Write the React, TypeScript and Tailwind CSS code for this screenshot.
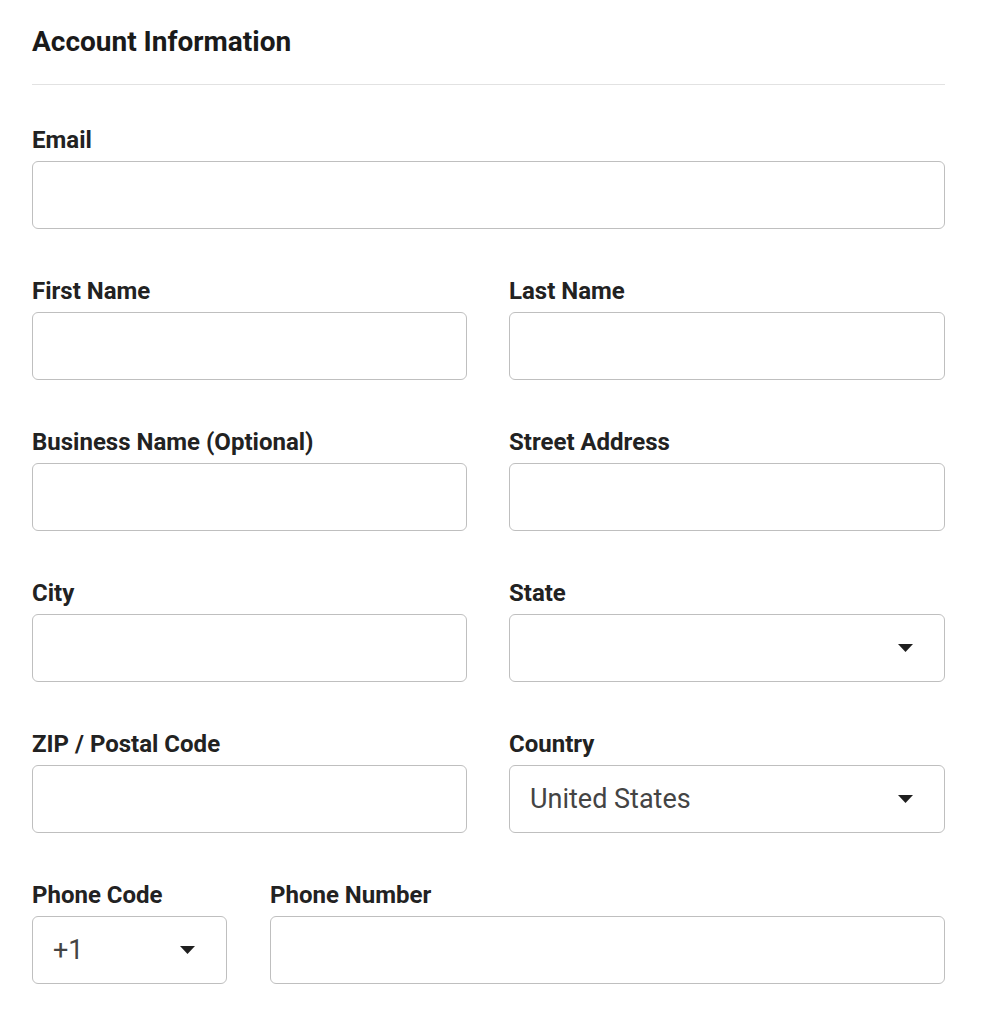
import React from 'react';

const font = { fontFamily: 'Roboto, "Liberation Sans", sans-serif' };

const inputCls =
  'block w-full h-[68px] rounded-[6px] border border-[#bfbfbf] bg-white px-[20px] text-[27px] text-[#444] outline-none';

function Caret() {
  return (
    <svg
      className="pointer-events-none absolute right-[32px] top-1/2 -translate-y-1/2"
      width="15"
      height="8"
      viewBox="0 0 15 8"
    >
      <path d="M0 0 H15 L7.5 8 Z" fill="#1f1f1f" />
    </svg>
  );
}

function Field({ label, children }: { label: string; children: React.ReactNode }) {
  return (
    <div className="flex flex-col">
      <label className="mb-[9px] text-[24px] leading-[24px] font-bold text-[#222]">{label}</label>
      {children}
    </div>
  );
}

function TextInput() {
  return <input type="text" className={inputCls} />;
}

function Select({ value, options }: { value: string; options: string[] }) {
  return (
    <div className="relative">
      <select defaultValue={value} className={inputCls + ' appearance-none'}>
        {options.map((o) => (
          <option key={o} value={o}>
            {o}
          </option>
        ))}
      </select>
      <Caret />
    </div>
  );
}

export default function App() {
  return (
    <div className="min-h-screen bg-white" style={font}>
      <div className="ml-[32px] w-[913px]">
        <div className="pt-[26px] pb-[26px] border-b border-[#e2e2e2]">
          <h1 className="text-[28px] leading-[32px] font-bold text-[#1a1a1a]">Account Information</h1>
        </div>

        <div className="mt-[43px] flex flex-col gap-[50px]">
          <Field label="Email">
            <TextInput />
          </Field>

          <div className="grid grid-cols-[435px_1fr] gap-x-[42px] gap-y-[50px]">
            <Field label="First Name">
              <TextInput />
            </Field>
            <Field label="Last Name">
              <TextInput />
            </Field>
            <Field label="Business Name (Optional)">
              <TextInput />
            </Field>
            <Field label="Street Address">
              <TextInput />
            </Field>
            <Field label="City">
              <TextInput />
            </Field>
            <Field label="State">
              <Select value="" options={['', 'Alabama', 'Alaska', 'Arizona', 'California', 'New York']} />
            </Field>
            <Field label="ZIP / Postal Code">
              <TextInput />
            </Field>
            <Field label="Country">
              <Select value="United States" options={['United States', 'Canada', 'Mexico']} />
            </Field>
          </div>

          <div className="flex gap-[43px]">
            <div className="w-[195px] shrink-0">
              <Field label="Phone Code">
                <Select value="+1" options={['+1', '+44', '+52']} />
              </Field>
            </div>
            <div className="flex-1">
              <Field label="Phone Number">
                <TextInput />
              </Field>
            </div>
          </div>
        </div>
      </div>
    </div>
  );
}
